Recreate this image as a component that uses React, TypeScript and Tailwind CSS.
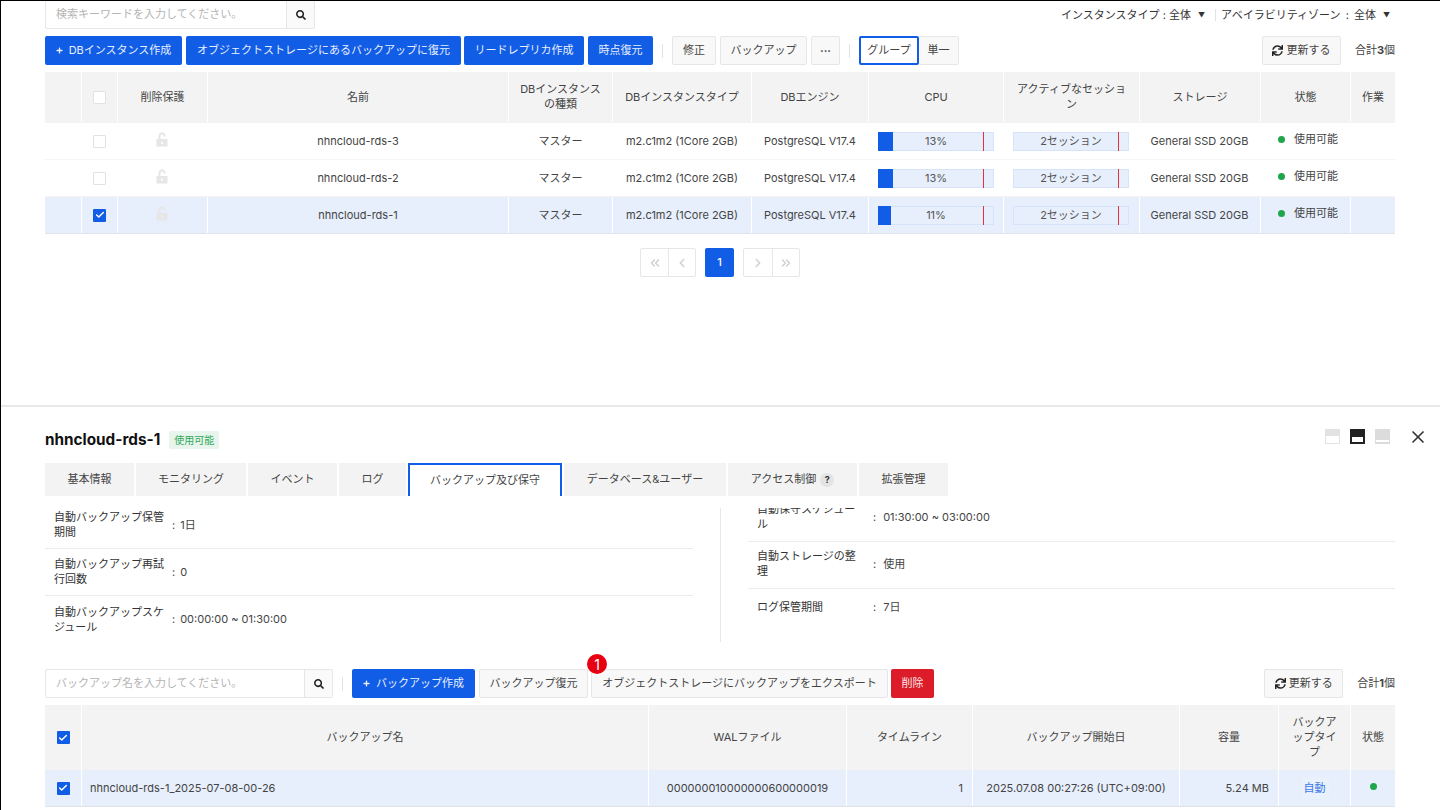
import { Check, ChevronLeft, ChevronRight, ChevronsLeft, ChevronsRight, X } from 'lucide-react';
import { FaPlus, FaSearch, FaSync } from 'react-icons/fa';
import type { ReactNode } from 'react';

const FONT = "font-['Inter','Noto_Sans_CJK_JP','Noto_Sans',sans-serif]";
const BTN = 'flex h-[29px] items-center justify-center whitespace-nowrap rounded-[2px] text-[11px]';

const INSTANCES = [
  { name: 'nhncloud-rds-3', cpu: 13, selected: false },
  { name: 'nhncloud-rds-2', cpu: 13, selected: false },
  { name: 'nhncloud-rds-1', cpu: 11, selected: true },
];

const TOP_COLS = ['w-[36px]', 'w-[36px]', 'w-[90px]', 'w-[301px]', 'w-[104px]', 'w-[139px]', 'w-[117px]', 'w-[135px]', 'w-[136px]', 'w-[121px]', 'w-[90px]', 'w-[45px]'];
const TOP_HEAD = ['', '', '削除保護', '名前', 'DBインスタンスの種類', 'DBインスタンスタイプ', 'DBエンジン', 'CPU', 'アクティブなセッション', 'ストレージ', '状態', '作業'];

const BACKUP_COLS = ['w-[36px]', 'w-[567px]', 'w-[198px]', 'w-[126px]', 'w-[207px]', 'w-[99px]', 'w-[72px]', 'w-[45px]'];
const BACKUP_HEAD = ['', 'バックアップ名', 'WALファイル', 'タイムライン', 'バックアップ開始日', '容量', 'バックアップタイプ', '状態'];

const TABS = [
  { label: '基本情報', w: 'w-[89px]' },
  { label: 'モニタリング', w: 'w-[110px]' },
  { label: 'イベント', w: 'w-[89px]' },
  { label: 'ログ', w: 'w-[67px]' },
  { label: 'バックアップ及び保守', w: 'w-[154px]', active: true },
  { label: 'データベース&ユーザー', w: 'w-[162px]' },
  { label: 'アクセス制御', w: 'w-[129px]', help: true },
  { label: '拡張管理', w: 'w-[89px]' },
];

function Btn({ children, className = '' }: { children: ReactNode; className?: string }) {
  return <button className={`${BTN} border border-[#e6e6e6] bg-[#f8f8f8] text-[#444] ${className}`}>{children}</button>;
}

function Primary({ children, className = '' }: { children: ReactNode; className?: string }) {
  return <button className={`${BTN} bg-[#125de6] text-[#e8f0ff] ${className}`}>{children}</button>;
}

function Divider() {
  return <span className="mx-[9px] h-[14px] w-px bg-[#e2e2e2]" />;
}

function Checkbox({ checked = false }: { checked?: boolean }) {
  if (checked) {
    return (
      <span className="flex h-[13px] w-[13px] items-center justify-center rounded-[1px] bg-[#125de6]">
        <Check size={10} strokeWidth={3.5} className="text-white" />
      </span>
    );
  }
  return <span className="block h-[13px] w-[13px] rounded-[1px] border border-[#e2e2e2] bg-white" />;
}

function Lock() {
  return (
    <svg width="12" height="15" viewBox="0 0 12 15" fill="#e6e6e6">
      <path d="M2.5 7V4a3.5 3.5 0 0 1 7 0v.5H7.6V4a1.6 1.6 0 0 0-3.2 0v3z" />
      <path fillRule="evenodd" d="M.5 7h11v7.5H.5zM5.2 9.5v2.6h1.6V9.5z" />
    </svg>
  );
}

function Meter({ value, label }: { value?: number; label: string }) {
  return (
    <div className="relative h-[19px] w-[116px] border border-[#d6e4fb] bg-[#e7effc] text-center text-[11px] leading-[17px] text-[#555]">
      {value !== undefined && (
        <div className="absolute -inset-y-px -left-px bg-[#125de6]" style={{ width: `${value}%` }} />
      )}
      <span className="relative">{label}</span>
      <div className="absolute -inset-y-px left-[104px] w-px bg-[#e8303a]" />
    </div>
  );
}

function SearchBox({ placeholder, inputW }: { placeholder: string; inputW: string }) {
  return (
    <div className="flex h-[29px] rounded-[2px] border border-[#e6e6e6] bg-white">
      <div className={`flex items-center pl-[10px] text-[11px] text-[#b4b4b4] ${inputW}`}>{placeholder}</div>
      <div className="flex w-[28px] items-center justify-center border-l border-[#e6e6e6] bg-[#fafafa]">
        <FaSearch size={10} className="text-[#222]" />
      </div>
    </div>
  );
}

function Refresh({ className = '' }: { className?: string }) {
  return (
    <Btn className={`gap-[3px] ${className}`}>
      <FaSync size={11} className="text-[#222]" />
      更新する
    </Btn>
  );
}

function InstancesPanel() {
  return (
    <section className="h-[405px] px-[44px]">
      <div className="-mt-px flex items-start justify-between">
        <SearchBox placeholder="検索キーワードを入力してください。" inputW="w-[240px]" />
        <div className="mt-[7px] flex items-center text-[11px] text-[#333]">
          <span>インスタンスタイプ : 全体</span>
          <span className="ml-[7px] mt-[2px] text-[7px]">▼</span>
          <span className="ml-[10px] mr-[5px] h-[12px] w-px bg-[#e2e2e2]" />
          <span className="[word-spacing:2px]">アベイラビリティゾーン : 全体</span>
          <span className="ml-[7px] mr-[6px] mt-[2px] text-[7px]">▼</span>
        </div>
      </div>

      <div className="mt-[7px] flex items-center">
        <Primary className="w-[137px] gap-[6px]">
          <FaPlus size={7} />
          DBインスタンス作成
        </Primary>
        <Primary className="ml-[4px] w-[275px]">オブジェクトストレージにあるバックアップに復元</Primary>
        <Primary className="ml-[3px] w-[120px]">リードレプリカ作成</Primary>
        <Primary className="ml-[4px] w-[65px]">時点復元</Primary>
        <Divider />
        <Btn className="w-[44px]">修正</Btn>
        <Btn className="ml-[4px] w-[87px]">バックアップ</Btn>
        <Btn className="ml-[4px] w-[29px] pb-[4px] font-bold">...</Btn>
        <Divider />
        <button className={`${BTN} w-[60px] border-2 border-[#125de6] bg-white text-[#444]`}>グループ</button>
        <Btn className="w-[40px] border-l-0">単一</Btn>
        <div className="ml-auto flex items-center">
          <Refresh className="w-[79px]" />
          <span className="ml-[14px] mr-px text-[11px] text-[#444]">合計<b>3</b>個</span>
        </div>
      </div>

      <div className="mt-[7px] flex h-[51px] w-[1350px] bg-[#f3f3f3] pb-px text-[11px] text-[#444]">
        {TOP_HEAD.map((h, i) => (
          <div
            key={i}
            className={`flex items-center justify-center px-[9px] text-center leading-[15px] ${TOP_COLS[i]} ${i > 0 ? 'border-l border-white' : ''}`}
          >
            {i === 1 ? <Checkbox /> : h}
          </div>
        ))}
      </div>

      {INSTANCES.map((row) => {
        const cellBorder = row.selected ? 'border-l border-white' : 'border-l border-transparent';
        return (
          <div
            key={row.name}
            className={`flex h-[37px] w-[1350px] border-b text-[11px] text-[#444] ${row.selected ? 'border-[#e0e4ea] bg-[#e7effc]' : 'border-[#f4f4f4]'}`}
          >
            <div className={`${TOP_COLS[0]}`} />
            <div className={`flex items-center justify-center ${TOP_COLS[1]} ${cellBorder}`}>
              <Checkbox checked={row.selected} />
            </div>
            <div className={`flex items-center justify-center pb-[3px] pr-px ${TOP_COLS[2]} ${cellBorder}`}>
              <Lock />
            </div>
            <div className={`flex items-center justify-center ${TOP_COLS[3]} ${cellBorder}`}>{row.name}</div>
            <div className={`flex items-center justify-center ${TOP_COLS[4]} ${cellBorder}`}>マスター</div>
            <div className={`flex items-center justify-center ${TOP_COLS[5]} ${cellBorder}`}>m2.c1m2 (1Core 2GB)</div>
            <div className={`flex items-center justify-center ${TOP_COLS[6]} ${cellBorder}`}>PostgreSQL V17.4</div>
            <div className={`flex items-center pl-[9px] ${TOP_COLS[7]} ${cellBorder}`}>
              <Meter value={row.cpu} label={`${row.cpu}%`} />
            </div>
            <div className={`flex items-center pl-[9px] ${TOP_COLS[8]} ${cellBorder}`}>
              <Meter label="2セッション" />
            </div>
            <div className={`flex items-center justify-center pr-px ${TOP_COLS[9]} ${cellBorder}`}>General SSD 20GB</div>
            <div className={`flex items-center pb-[3px] pl-[17px] ${TOP_COLS[10]} ${cellBorder}`}>
              <span className="mr-[9px] h-[7px] w-[7px] rounded-full bg-[#1fa64a]" />
              使用可能
            </div>
            <div className={`${TOP_COLS[11]} ${cellBorder}`} />
          </div>
        );
      })}

      <div className="mt-[14px] flex justify-center pr-px text-[#cfcfcf]">
        <div className="flex h-[29px] overflow-hidden rounded-[2px] border border-[#e6e6e6]">
          <span className="flex w-[27px] items-center justify-center"><ChevronsLeft size={14} strokeWidth={2.5} /></span>
          <span className="flex w-[27px] items-center justify-center border-l border-[#e6e6e6]"><ChevronLeft size={14} strokeWidth={2.5} /></span>
        </div>
        <div className="mx-[9px] flex h-[29px] w-[29px] items-center justify-center rounded-[2px] bg-[#125de6] text-[11px] font-medium text-white">1</div>
        <div className="flex h-[29px] overflow-hidden rounded-[2px] border border-[#e6e6e6]">
          <span className="flex w-[28px] items-center justify-center"><ChevronRight size={14} strokeWidth={2.5} /></span>
          <span className="flex w-[27px] items-center justify-center border-l border-[#e6e6e6]"><ChevronsRight size={14} strokeWidth={2.5} /></span>
        </div>
      </div>
    </section>
  );
}

function InfoRow({ label, value, labelW, gap, last = false, height = 'h-[47px] pb-[2px]' }: { label: string; value: string; labelW: string; gap: string; last?: boolean; height?: string }) {
  return (
    <div className={`flex items-center px-[9px] text-[11px] leading-[15px] text-[#333] ${height} ${last ? '' : 'border-b border-[#ececec]'}`}>
      <div className={labelW}>{label}</div>
      <div className="text-[#444]"><span className={gap}>:</span>{value}</div>
    </div>
  );
}

function PanelIcons() {
  return (
    <div className="mb-[7px] flex items-center">
      <span className="flex h-[15px] w-[15px] items-end bg-[#e2e2e2] p-[1px]"><span className="h-[7px] w-full bg-white" /></span>
      <span className="ml-[10px] flex h-[15px] w-[15px] items-end bg-[#222] p-[2px]"><span className="h-[5px] w-full bg-white" /></span>
      <span className="ml-[10px] flex h-[15px] w-[15px] items-end bg-[#dcdcdc] p-[1px] pb-[2px]"><span className="h-[2px] w-full bg-white" /></span>
      <X size={20} strokeWidth={2} className="-my-[3px] ml-[18px] mr-[-32px] text-[#333]" />
    </div>
  );
}

function DetailPanel() {
  return (
    <section className="px-[44px]">
      <div className="flex h-[56px] items-center justify-between pt-[10px]">
        <div className="flex items-center">
          <h2 className="text-[15.3px] font-bold text-[#111]">nhncloud-rds-1</h2>
          <span className="ml-[9px] flex h-[18px] w-[50px] items-center justify-center rounded-[2px] bg-[#e8f5ec] text-[10px] text-[#2fa85a]">使用可能</span>
        </div>
        <PanelIcons />
      </div>

      <div className="flex h-[33px]">
        {TABS.map((tab) => (
          <div
            key={tab.label}
            className={`mr-[2px] flex items-center justify-center text-[11px] text-[#444] ${tab.w} ${tab.active ? 'border-x-2 border-t-2 border-[#125de6] bg-white' : 'bg-[#f3f3f3]'}`}
          >
            {tab.label}
            {tab.help && (
              <span className="ml-[4px] flex h-[14px] w-[14px] items-center justify-center rounded-full bg-[#e4e4e4] text-[9px] font-bold text-[#333]">?</span>
            )}
          </div>
        ))}
      </div>

      <div className="mt-[12px] flex h-[134px] overflow-hidden">
        <div className="w-[648px]">
          <div className="-mt-[6px]">
            <InfoRow label="自動バックアップ保管期間" value="1日" labelW="w-[118px]" gap="mr-[5px]" height="h-[47px]" />
            <InfoRow label="自動バックアップ再試行回数" value="0" labelW="w-[118px]" gap="mr-[5px]" height="h-[47px]" />
            <InfoRow label="自動バックアップスケジュール" value="00:00:00 ~ 01:30:00" labelW="w-[118px]" gap="mr-[5px]" height="h-[47px]" last />
          </div>
        </div>
        <div className="ml-[27px] w-px bg-[#e8e8e8]" />
        <div className="ml-[27px] w-[647px]">
          <div className="-mt-[13px]">
            <InfoRow label="自動保守スケジュール" value="01:30:00 ~ 03:00:00" labelW="w-[116px] pr-[12px]" gap="mr-[7px]" />
            <InfoRow label="自動ストレージの整理" value="使用" labelW="w-[116px] pr-[12px]" gap="mr-[7px]" />
            <InfoRow label="ログ保管期間" value="7日" labelW="w-[116px] pr-[12px]" gap="mr-[7px]" height="h-[38px] pb-[2px]" last />
          </div>
        </div>
      </div>

      <div className="relative mt-[27px] flex items-center">
        <SearchBox placeholder="バックアップ名を入力してください。" inputW="w-[258px]" />
        <Divider />
        <Primary className="w-[123px] gap-[6px]">
          <FaPlus size={7} />
          バックアップ作成
        </Primary>
        <Btn className="ml-[4px] w-[109px]">バックアップ復元</Btn>
        <Btn className="ml-[3px] w-[297px]">オブジェクトストレージにバックアップをエクスポート</Btn>
        <button className={`${BTN} ml-[3px] w-[43px] bg-[#dc1c28] text-[#f6e6e6]`}>削除</button>
        <div className="ml-auto flex items-center">
          <Refresh className="w-[79px]" />
          <span className="ml-[14px] mr-px text-[11px] text-[#444]">合計<b>1</b>個</span>
        </div>
        <span className="absolute left-[542px] top-[-15px] flex h-[20px] w-[20px] items-center justify-center rounded-full bg-[#e60012] text-[14px] text-white">1</span>
      </div>

      <div className="mt-[7px] flex h-[65px] w-[1350px] bg-[#f3f3f3] text-[11px] text-[#444]">
        {BACKUP_HEAD.map((h, i) => (
          <div
            key={i}
            className={`flex items-center justify-center px-[9px] text-center leading-[15px] ${BACKUP_COLS[i]} ${i > 0 ? 'border-l border-white' : ''}`}
          >
            {i === 0 ? <Checkbox checked /> : h}
          </div>
        ))}
      </div>
      <div className="flex h-[37px] w-[1350px] border-b border-[#e0e4ea] bg-[#e7effc] text-[11px] text-[#444]">
        <div className={`flex items-center justify-center ${BACKUP_COLS[0]}`}><Checkbox checked /></div>
        <div className={`flex items-center border-l border-white pl-[8px] ${BACKUP_COLS[1]}`}>nhncloud-rds-1_2025-07-08-00-26</div>
        <div className={`flex items-center justify-center border-l border-white ${BACKUP_COLS[2]}`}>000000010000000600000019</div>
        <div className={`flex items-center justify-end border-l border-white pr-[9px] ${BACKUP_COLS[3]}`}>1</div>
        <div className={`flex items-center justify-center border-l border-white ${BACKUP_COLS[4]}`}>2025.07.08 00:27:26 (UTC+09:00)</div>
        <div className={`flex items-center justify-end border-l border-white pr-[9px] ${BACKUP_COLS[5]}`}>5.24 MB</div>
        <div className={`flex items-center justify-center border-l border-white ${BACKUP_COLS[6]}`}>
          <span className="bg-[#e9f1fd] px-[3px] py-[3px] text-[#3b78e7]">自動</span>
        </div>
        <div className={`flex items-center justify-center border-l border-white pb-[3px] ${BACKUP_COLS[7]}`}>
          <span className="h-[7px] w-[7px] rounded-full bg-[#1fa64a]" />
        </div>
      </div>
    </section>
  );
}

export default function App() {
  return (
    <div className={`h-[810px] w-[1440px] overflow-hidden border-l border-t border-black bg-white ${FONT}`}>
      <InstancesPanel />
      <div className="h-[2px] bg-[#e8e8e8]" />
      <DetailPanel />
    </div>
  );
}
